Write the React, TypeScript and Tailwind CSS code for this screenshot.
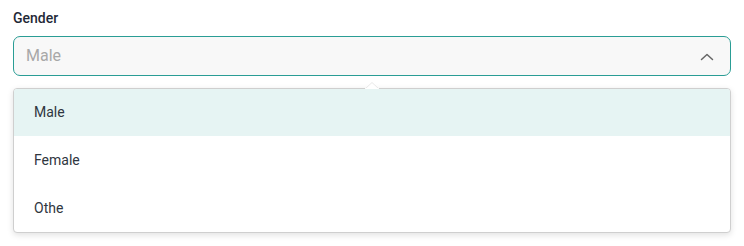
import React from "react";

export default function App() {
  return (
    <div className="w-[744px] h-[246px] bg-white px-[13px] pt-[10px]" style={{ fontFamily: "Roboto, 'Noto Sans', sans-serif" }}>
      <div className="text-[14px] leading-[17px] font-medium text-[#1f2937]">Gender</div>
      <div className="mt-[9px] h-[40px] rounded-[7px] border border-[#2a9d95] bg-[#f8f8f8] flex items-center justify-between pl-[12px] pr-[15px]">
        <span className="text-[16px] text-[#a8a8a8]">Male</span>
        <svg width="16" height="10" viewBox="0 0 16 10" className="mt-[2px]">
          <path d="M2.5 7.5 L8 2.5 L13.5 7.5" fill="none" stroke="#666" strokeWidth="1.5" strokeLinecap="round" strokeLinejoin="round" />
        </svg>
      </div>
      <div className="relative mt-[12px]">
        <div className="relative rounded-[4px] border border-[#cfcfcf] bg-white shadow-[0_2px_6px_rgba(0,0,0,0.12)] overflow-hidden">
          <div className="h-[47px] flex items-center pl-[20px] bg-[#e6f4f3] text-[14px] text-[#2f3640]">Male</div>
          <div className="h-[48px] flex items-center pl-[20px] text-[14px] text-[#2f3640]">Female</div>
          <div className="h-[48px] flex items-center pl-[20px] text-[14px] text-[#2f3640]">Othe</div>
        </div>
        <svg width="14" height="7" viewBox="0 0 14 7" className="absolute left-[352px] top-[-6px]">
          <path d="M0 7 L7 0.5 L14 7 Z" fill="#ffffff" />
          <path d="M0 7 L7 0.5 L14 7" fill="none" stroke="#e2e2e2" strokeWidth="0.8" />
          <rect x="0" y="6.2" width="14" height="1" fill="#ffffff" />
        </svg>
      </div>
    </div>
  );
}
